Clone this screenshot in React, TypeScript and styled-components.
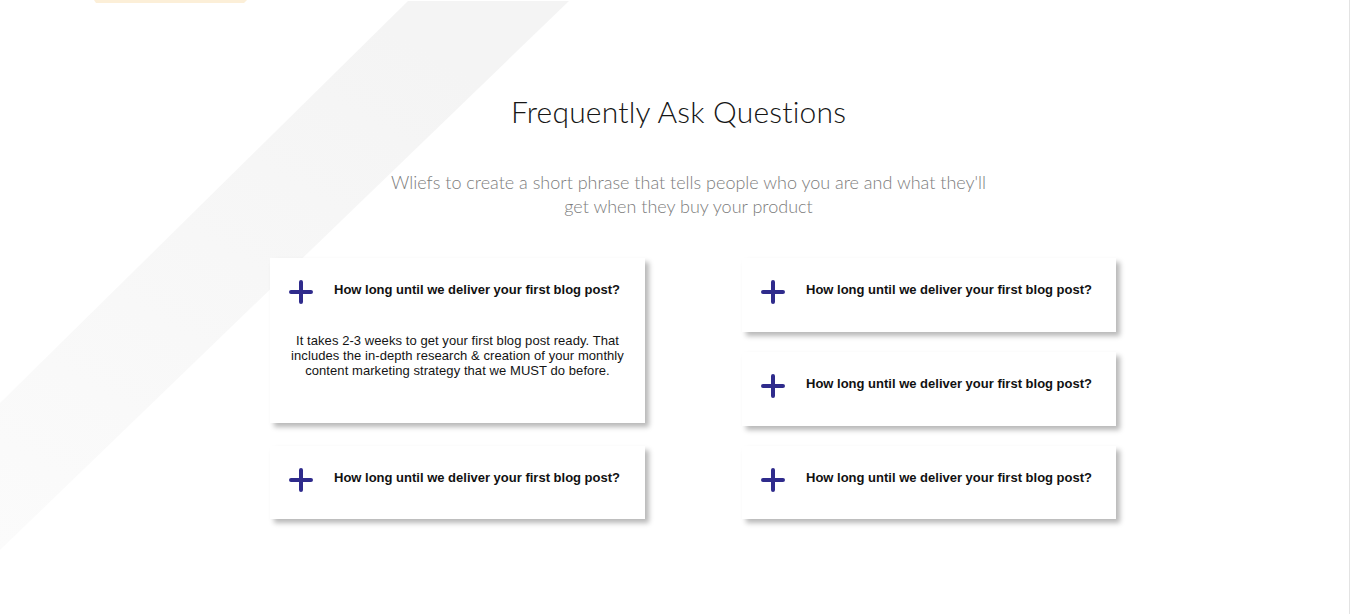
import React from "react";
import styled, { createGlobalStyle } from "styled-components";

const Global = createGlobalStyle`
  html, body { margin: 0; padding: 0; background: #ffffff; }
  body { font-family: "Liberation Sans", Arial, sans-serif; }
`;

const Page = styled.section`
  position: relative;
  width: 1349px;
  height: 614px;
  border-right: 1px solid #e3e3e3;
  background: #ffffff;
  overflow: hidden;
  box-sizing: content-box;
`;

const Decor = styled.svg`
  position: absolute;
  left: 0;
  top: 0;
  width: 1349px;
  height: 614px;
  pointer-events: none;
`;

const Content = styled.div`
  position: relative;
  display: flex;
  flex-direction: column;
  align-items: center;
  padding-top: 92px;
`;

const Title = styled.h2`
  margin: 0;
  font-family: Lato, "Open Sans", sans-serif;
  font-weight: 300;
  font-size: 30px;
  line-height: 38px;
  color: #161616;
  letter-spacing: 0.2px;
  transform: translateX(4px);
`;

const Subtitle = styled.p`
  margin: 40px 0 0;
  width: 604px;
  font-family: Lato, "Open Sans", sans-serif;
  font-weight: 300;
  font-size: 18px;
  line-height: 24px;
  color: #7c7c7c;
  text-align: center;
  transform: translateX(14px);
`;

const Grid = styled.div`
  align-self: stretch;
  display: flex;
  gap: 97px;
  margin-top: 40px;
  padding-left: 270px;
`;

const Column = styled.div<{ $gap: number; $width: number }>`
  display: flex;
  flex-direction: column;
  gap: ${(p) => p.$gap}px;
  width: ${(p) => p.$width}px;
`;

const Card = styled.div<{ $short?: boolean }>`
  background: #ffffff;
  box-shadow: 4px 4px 5px rgba(0, 0, 0, 0.28);
  padding: 21px 19px ${(p) => (p.$short ? 27 : 28)}px;
`;

const Header = styled.div`
  display: flex;
  align-items: flex-start;
  gap: 21px;
  height: 25px;
`;

const PlusIcon = styled.svg`
  flex: none;
  width: 24px;
  height: 24px;
  margin-top: 1px;
`;

const Question = styled.h3`
  margin: 1px 0 0;
  font-family: "Liberation Sans", Arial, sans-serif;
  font-weight: 700;
  font-size: 13px;
  line-height: 20px;
  color: #111111;
  white-space: nowrap;
`;

const Answer = styled.p`
  margin: 29px 0 0;
  padding-bottom: 17px;
  font-family: "Liberation Sans", Arial, sans-serif;
  font-size: 13px;
  line-height: 15px;
  letter-spacing: 0.07px;
  color: #141414;
  text-align: center;
  white-space: nowrap;
`;

const Plus = () => (
  <PlusIcon viewBox="0 0 24 24" aria-hidden="true">
    <path
      d="M2 12H22M12 2V22"
      stroke="#2f2b8c"
      strokeWidth="4"
      strokeLinecap="round"
      fill="none"
    />
  </PlusIcon>
);

const Q = "How long until we deliver your first blog post?";

const Item = ({ open, short }: { open?: boolean; short?: boolean }) => (
  <Card $short={short}>
    <Header>
      <Plus />
      <Question>{Q}</Question>
    </Header>
    {open && (
      <Answer>
        It takes 2-3 weeks to get your first blog post ready. That
        <br />
        includes the in-depth research &amp; creation of your monthly
        <br />
        content marketing strategy that we MUST do before.
      </Answer>
    )}
  </Card>
);

export default function App() {
  return (
    <>
      <Global />
      <Page>
        <Decor viewBox="0 0 1349 614" aria-hidden="true">
          <defs>
            <linearGradient id="band" x1="0.6" y1="0" x2="0" y2="1">
              <stop offset="0" stopColor="#f4f4f4" />
              <stop offset="1" stopColor="#fbfbfb" />
            </linearGradient>
          </defs>
          <polygon points="408,1 569,1 0,550 0,403" fill="url(#band)" />
          <polygon points="94,0 247,0 244,3 96,3" fill="#fcefd8" />
        </Decor>
        <Content>
          <Title>Frequently Ask Questions</Title>
          <Subtitle>
            Wliefs to create a short phrase that tells people who you are and what they'll get
            when they buy your product
          </Subtitle>
          <Grid>
            <Column $gap={23} $width={375}>
              <Item open />
              <Item short />
            </Column>
            <Column $gap={20} $width={374}>
              <Item />
              <Item />
              <Item short />
            </Column>
          </Grid>
        </Content>
      </Page>
    </>
  );
}
